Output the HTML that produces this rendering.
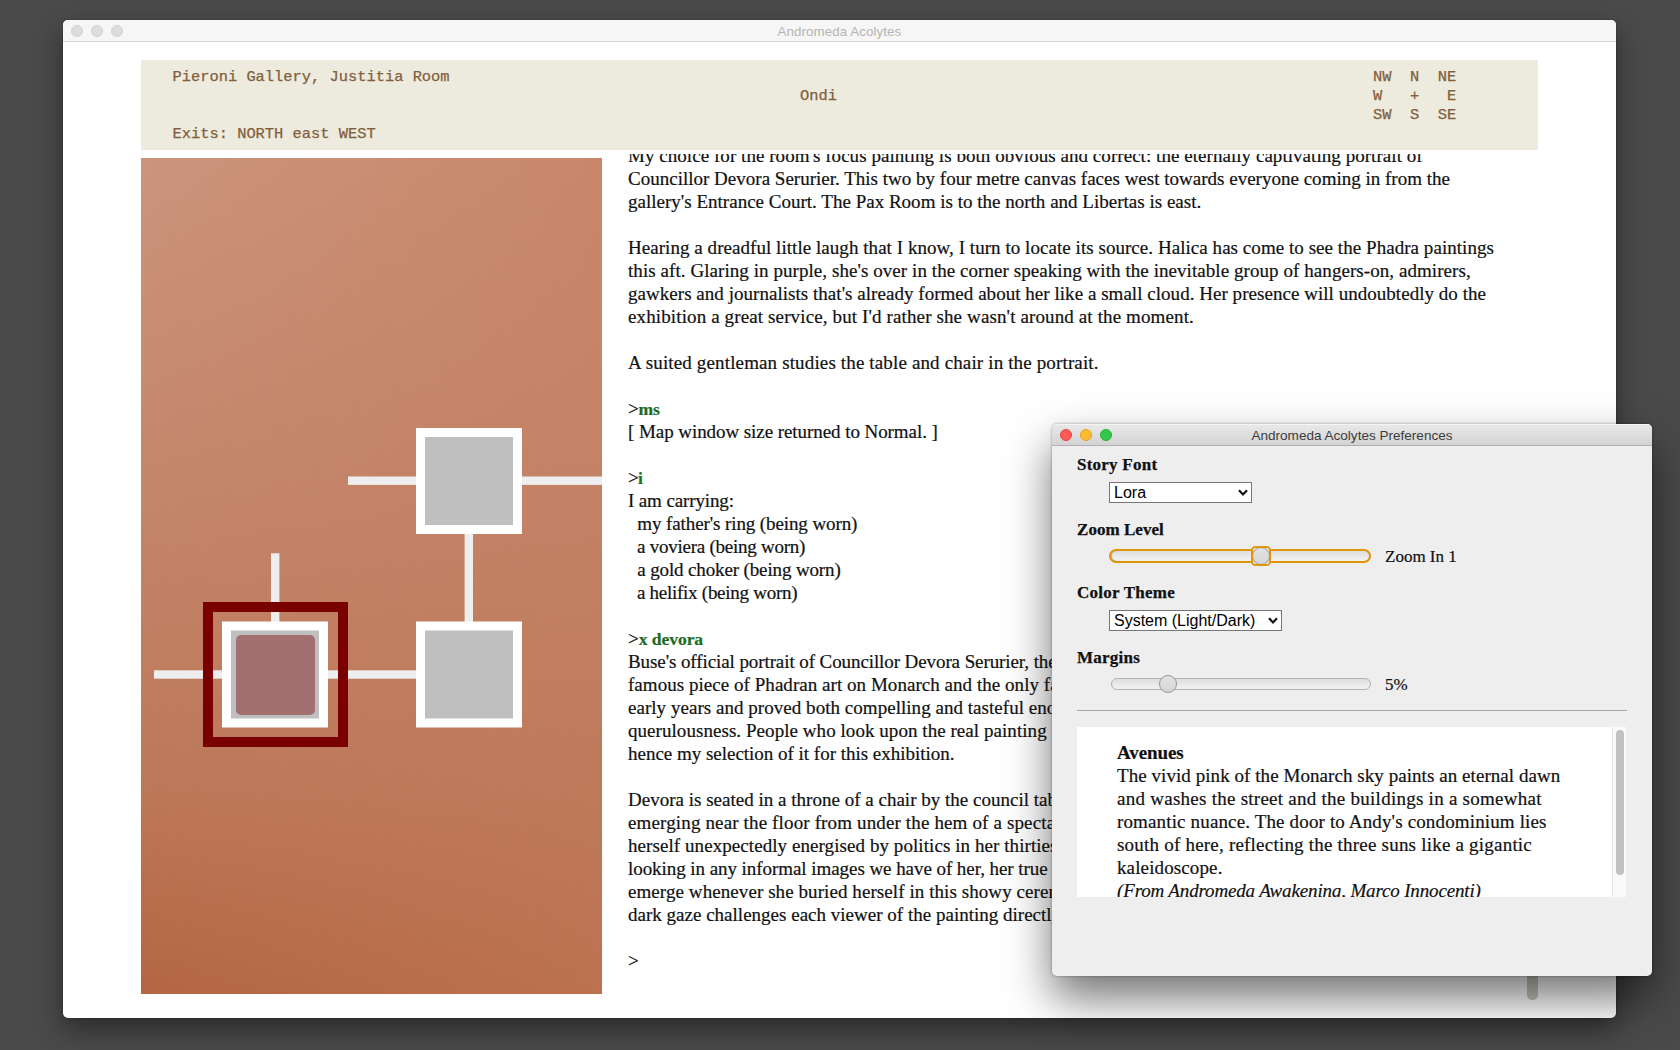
<!DOCTYPE html>
<html lang="en">
<head>
<meta charset="utf-8">
<title>Andromeda Acolytes</title>
<style>
*{box-sizing:border-box;margin:0;padding:0}
html,body{width:1680px;height:1050px;overflow:hidden}
body{background:#4a4a4a;position:relative;font-family:"Liberation Sans",sans-serif}
.abs{position:absolute}
/* main window */
#win{position:absolute;left:63px;top:20px;width:1553px;height:998px;background:#fff;border-radius:5px;box-shadow:0 12px 26px rgba(0,0,0,.42),0 0 2px rgba(0,0,0,.4);overflow:hidden}
#tbar{position:absolute;left:0;top:0;width:100%;height:22px;background:#f6f6f6;border-bottom:1px solid #d4d4d4}
#tbar .t{position:absolute;left:0;right:0;top:0.5px;line-height:22px;text-align:center;font-size:13.3px;color:#b4b4b4;letter-spacing:.1px}
.tl{position:absolute;width:12px;height:12px;border-radius:50%;top:5px;background:#dddddd;border:1px solid #d0d0d0}
/* status */
#status{position:absolute;left:141px;top:60px;width:1397px;height:90px;background:#edeade;color:#82603c;-webkit-text-stroke:0.25px #82603c;font-family:"Liberation Mono",monospace;font-size:15.4px;line-height:19px;white-space:pre}
#status div{position:absolute;height:19px}
/* map */
#map{position:absolute;left:141px;top:158px;width:461px;height:836px;background:linear-gradient(180deg,#cb957d 0%,#c4856a 42%,#bd7859 76%,#b46643 100%);overflow:hidden}
#map:before{content:"";position:absolute;left:0;top:0;width:100%;height:100%;background:linear-gradient(180deg,#c8876a 0%,#c38165 42%,#be7a5b 76%,#bb7250 100%);-webkit-mask-image:linear-gradient(90deg,transparent,#000);mask-image:linear-gradient(90deg,transparent,#000)}
#map svg{position:absolute;left:0;top:0}
/* story */
#storyclip{position:absolute;left:620px;top:153.5px;width:940px;height:850px;overflow:hidden}
#story{position:absolute;left:8px;top:-10px;width:920px;-webkit-text-stroke:0.2px #111;font-family:"Liberation Serif",serif;font-size:19px;line-height:23px;color:#111}
#story div{height:23px;white-space:pre}
#story b{color:#1d6b1d;font-size:17.6px;-webkit-text-stroke:0.2px #1d6b1d}
.in{color:#111;font-weight:normal}
/* prefs */
#prefs{position:absolute;left:1052px;top:424px;width:600px;height:552px;background:#eeeeee;border-radius:5px;box-shadow:0 22px 45px rgba(0,0,0,.55),0 0 3px rgba(0,0,0,.35);overflow:hidden;font-family:"Liberation Serif",serif;font-size:17px;color:#111}
#ptbar{position:absolute;left:0;top:0;width:100%;height:22px;background:linear-gradient(#eae9ea,#d4d3d4);border-bottom:1px solid #b2b0b2;box-shadow:inset 0 1px 0 rgba(255,255,255,.55)}
#ptbar .t{position:absolute;left:0;right:0;top:0.5px;line-height:22px;text-align:center;font-size:13.55px;color:#3c3c3c;font-family:"Liberation Sans",sans-serif}
.ptl{position:absolute;width:12px;height:12px;border-radius:50%;top:5px}
.lbl{position:absolute;left:25px;font-weight:bold;-webkit-text-stroke:0.25px #111;font-size:17px;line-height:20px;white-space:pre}
.sel{position:absolute;left:57px;height:21px;background:#fff;border:1px solid #767676;font-family:"Liberation Sans",sans-serif;font-size:16px;line-height:19px;padding-left:4px;color:#000;white-space:pre}
.sel svg{position:absolute;right:3px;top:6px}
.track{position:absolute;left:59px;width:259.5px;height:12px;border-radius:6px;background:linear-gradient(#dedede,#f3f3f3);border:1px solid #b2b2b2}
.thumb{position:absolute;width:18px;height:18px;border-radius:50%;background:linear-gradient(#e2e2e2,#d6d6d6);border:1px solid #969696}
.val{position:absolute;left:333px;-webkit-text-stroke:0.2px #111;font-size:17px;line-height:20px;white-space:pre}
#prev{position:absolute;left:25px;top:303px;width:549px;height:170px;background:#fff;overflow:hidden}
#prev .tx{position:absolute;left:40px;top:14px;-webkit-text-stroke:0.2px #111;font-size:19px;line-height:23px}
#prev .tx div{height:23px;white-space:pre}
</style>
</head>
<body>

<div id="win">
  <div id="tbar">
    <div class="tl" style="left:8px"></div><div class="tl" style="left:28px"></div><div class="tl" style="left:48px"></div>
    <div class="t">Andromeda Acolytes</div>
  </div>
  <div class="abs" style="left:1464px;top:860px;width:11px;height:120px;border-radius:5.5px;background:#c6c6bf"></div>
</div>

<div id="storyclip"><div id="story">
<div style="letter-spacing:0.048px">My choice for the room's focus painting is both obvious and correct: the eternally captivating portrait of</div>
<div style="letter-spacing:0.008px">Councillor Devora Serurier. This two by four metre canvas faces west towards everyone coming in from the</div>
<div style="letter-spacing:0.011px">gallery's Entrance Court. The Pax Room is to the north and Libertas is east.</div>
<div> </div>
<div style="letter-spacing:0.048px">Hearing a dreadful little laugh that I know, I turn to locate its source. Halica has come to see the Phadra paintings</div>
<div style="letter-spacing:0.064px">this aft. Glaring in purple, she's over in the corner speaking with the inevitable group of hangers-on, admirers,</div>
<div style="letter-spacing:0.036px">gawkers and journalists that's already formed about her like a small cloud. Her presence will undoubtedly do the</div>
<div style="letter-spacing:0.125px">exhibition a great service, but I'd rather she wasn't around at the moment.</div>
<div> </div>
<div style="letter-spacing:0.143px">A suited gentleman studies the table and chair in the portrait.</div>
<div> </div>
<div style="letter-spacing:-0.145px">&gt;<b>ms</b></div>
<div style="letter-spacing:-0.066px">[ Map window size returned to Normal. ]</div>
<div> </div>
<div style="letter-spacing:-0.655px">&gt;<b>i</b></div>
<div style="letter-spacing:-0.131px">I am carrying:</div>
<div style="letter-spacing:-0.101px">  my father's ring (being worn)</div>
<div style="letter-spacing:-0.245px">  a voviera (being worn)</div>
<div style="letter-spacing:-0.133px">  a gold choker (being worn)</div>
<div style="letter-spacing:-0.267px">  a helifix (being worn)</div>
<div> </div>
<div style="letter-spacing:-0.069px">&gt;<b>x devora</b></div>
<div style="letter-spacing:-0.09px">Buse's official portrait of Councillor Devora Serurier, the most</div>
<div style="letter-spacing:0.041px">famous piece of Phadran art on Monarch and the only famous</div>
<div style="letter-spacing:0.037px">early years and proved both compelling and tasteful enough</div>
<div style="letter-spacing:0.054px">querulousness. People who look upon the real painting feel</div>
<div style="letter-spacing:-0.015px">hence my selection of it for this exhibition.</div>
<div> </div>
<div style="letter-spacing:0.011px">Devora is seated in a throne of a chair by the council table,</div>
<div style="letter-spacing:0.141px">emerging near the floor from under the hem of a spectacular</div>
<div style="letter-spacing:0.071px">herself unexpectedly energised by politics in her thirties.</div>
<div style="letter-spacing:-0.06px">looking in any informal images we have of her, her true self</div>
<div style="letter-spacing:0.076px">emerge whenever she buried herself in this showy ceremonial</div>
<div style="letter-spacing:0.01px">dark gaze challenges each viewer of the painting directly.</div>
<div> </div>
<div>&gt;</div>
</div></div>

<div id="status">
<div style="left:31.5px;top:8px">Pieroni Gallery, Justitia Room</div>
<div style="left:659px;top:27px">Ondi</div>
<div style="left:31.5px;top:65px">Exits: NORTH east WEST</div>
<div style="left:1232px;top:8px">NW  N  NE</div>
<div style="left:1232px;top:27px">W   +   E</div>
<div style="left:1232px;top:46px">SW  S  SE</div>
</div>

<div id="map">
<svg width="461" height="836" viewBox="141 158 461 836">
  <g fill="#eeeeee">
    <rect x="348" y="476.5" width="254" height="8.4"/>
    <rect x="464.6" y="530" width="8.4" height="95"/>
    <rect x="271" y="553.3" width="8.4" height="70"/>
    <rect x="154" y="670.3" width="265" height="8.4"/>
  </g>
  <rect x="208" y="607" width="135" height="135" fill="none" stroke="#7a0000" stroke-width="10"/>
  <g>
    <rect x="416" y="428" width="106" height="106" fill="#ffffff"/>
    <rect x="425" y="437" width="88" height="88" fill="#bfbfbf"/>
    <rect x="416" y="621.5" width="106" height="106" fill="#ffffff"/>
    <rect x="425" y="630.5" width="88" height="88" fill="#bfbfbf"/>
    <rect x="222" y="621.5" width="106" height="106" fill="#ffffff"/>
    <rect x="231" y="630.5" width="88" height="88" fill="#bfbfbf"/>
    <rect x="236" y="635" width="79" height="80" rx="5" fill="#a27070"/>
  </g>
</svg>
</div>

<div id="prefs">
  <div id="ptbar">
    <div class="ptl" style="left:8px;background:#fc5b57;border:1px solid #e2443f"></div>
    <div class="ptl" style="left:28px;background:#fdbc2e;border:1px solid #e0a028"></div>
    <div class="ptl" style="left:48px;background:#34c84a;border:1px solid #2bac2f"></div>
    <div class="t">Andromeda Acolytes Preferences</div>
  </div>
  <div class="lbl" style="top:31px;letter-spacing:0.24px">Story Font</div>
  <div class="sel" style="top:58px;width:143px">Lora<svg width="10" height="7" viewBox="0 0 10 7"><path d="M1 1.2 L5 5.4 L9 1.2" fill="none" stroke="#111" stroke-width="2.2"/></svg></div>
  <div class="lbl" style="top:96px;letter-spacing:0.04px">Zoom Level</div>
  <div class="track" style="top:126px"></div>
  <div class="abs" style="left:57px;top:125px;width:262px;height:14px;border:2px solid #e0950c;border-radius:7px"></div>
  <div class="abs" style="left:201px;top:124px;width:16px;height:16px;background:#efefef"></div>
  <div class="thumb" style="left:200px;top:123px"></div>
  <div class="abs" style="left:199px;top:122px;width:20px;height:20px;border:2px solid #e0950c;border-radius:4.5px"></div>
  <div class="val" style="top:123px">Zoom In 1</div>
  <div class="lbl" style="top:159px;letter-spacing:0.245px">Color Theme</div>
  <div class="sel" style="top:186px;width:173px">System (Light/Dark)<svg width="10" height="7" viewBox="0 0 10 7"><path d="M1 1.2 L5 5.4 L9 1.2" fill="none" stroke="#111" stroke-width="2.2"/></svg></div>
  <div class="lbl" style="top:224px;letter-spacing:0.257px">Margins</div>
  <div class="track" style="top:254px"></div>
  <div class="thumb" style="left:107px;top:251px"></div>
  <div class="val" style="top:251px">5%</div>
  <div class="abs" style="left:25px;top:286px;width:550px;height:1px;background:#a6a6a6"></div>
  <div id="prev">
    <div class="tx">
<div style="letter-spacing:-0.086px"><b>Avenues</b></div>
<div style="letter-spacing:0.059px">The vivid pink of the Monarch sky paints an eternal dawn</div>
<div style="letter-spacing:0.258px">and washes the street and the buildings in a somewhat</div>
<div style="letter-spacing:0.146px">romantic nuance. The door to Andy's condominium lies</div>
<div style="letter-spacing:0.213px">south of here, reflecting the three suns like a gigantic</div>
<div style="letter-spacing:0.123px">kaleidoscope.</div>
<div style="letter-spacing:-0.151px"><i>(From Andromeda Awakening, Marco Innocenti)</i></div>
    </div>
    <div class="abs" style="right:0;top:0;width:14px;height:170px;background:#fafafa;border-left:1px solid #e8e8e8"></div>
    <div class="abs" style="right:2px;top:3px;width:8px;height:145px;border-radius:4px;background:#c1c1c1"></div>
  </div>
</div>

</body>
</html>
